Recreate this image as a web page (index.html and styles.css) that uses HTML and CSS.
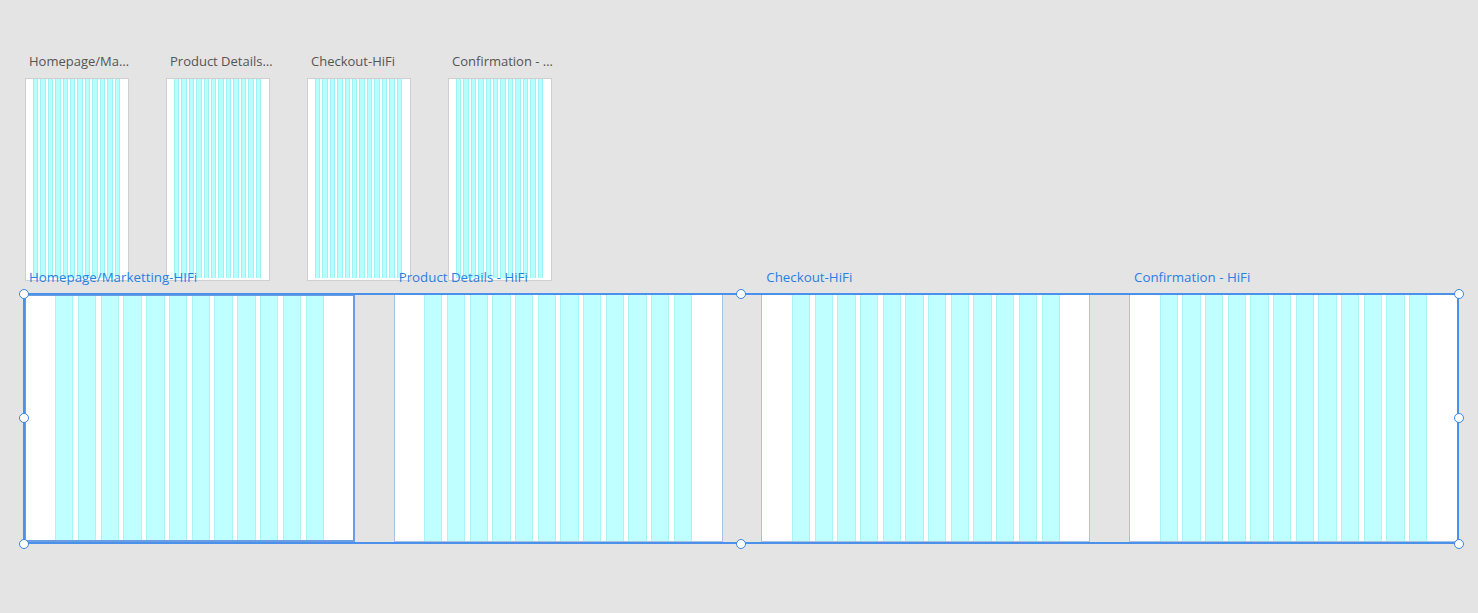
FILE: index.html
```
<!DOCTYPE html>
<html>
<head>
    <title>Artboards</title>
    <link rel="stylesheet" href="styles.css">
</head>
<body>
    <div class="canvas">
        <div class="thumbs">
            <div class="thumb">
                <div class="thumb-name">Homepage/Marketting-HIFi</div>
                <div class="thumb-box cols">
                    <span></span><span></span><span></span><span></span><span></span><span></span>
                    <span></span><span></span><span></span><span></span><span></span><span></span>
                </div>
            </div>
            <div class="thumb">
                <div class="thumb-name">Product Details - HiFi</div>
                <div class="thumb-box cols">
                    <span></span><span></span><span></span><span></span><span></span><span></span>
                    <span></span><span></span><span></span><span></span><span></span><span></span>
                </div>
            </div>
            <div class="thumb">
                <div class="thumb-name">Checkout-HiFi</div>
                <div class="thumb-box cols">
                    <span></span><span></span><span></span><span></span><span></span><span></span>
                    <span></span><span></span><span></span><span></span><span></span><span></span>
                </div>
            </div>
            <div class="thumb">
                <div class="thumb-name">Confirmation - HiFi</div>
                <div class="thumb-box cols">
                    <span></span><span></span><span></span><span></span><span></span><span></span>
                    <span></span><span></span><span></span><span></span><span></span><span></span>
                </div>
            </div>
        </div>

        <div class="boards">
            <div class="board board-first">
                <div class="board-name">Homepage/Marketting-HIFi</div>
                <div class="board-box cols">
                    <span></span><span></span><span></span><span></span><span></span><span></span>
                    <span></span><span></span><span></span><span></span><span></span><span></span>
                </div>
            </div>
            <div class="board">
                <div class="board-name">Product Details - HiFi</div>
                <div class="board-box cols">
                    <span></span><span></span><span></span><span></span><span></span><span></span>
                    <span></span><span></span><span></span><span></span><span></span><span></span>
                </div>
            </div>
            <div class="board">
                <div class="board-name">Checkout-HiFi</div>
                <div class="board-box cols">
                    <span></span><span></span><span></span><span></span><span></span><span></span>
                    <span></span><span></span><span></span><span></span><span></span><span></span>
                </div>
            </div>
            <div class="board">
                <div class="board-name">Confirmation - HiFi</div>
                <div class="board-box cols">
                    <span></span><span></span><span></span><span></span><span></span><span></span>
                    <span></span><span></span><span></span><span></span><span></span><span></span>
                </div>
            </div>

            <!-- selection box over all four artboards -->
            <div class="selection">
                <i class="handle h-tl"></i>
                <i class="handle h-tc"></i>
                <i class="handle h-tr"></i>
                <i class="handle h-ml"></i>
                <i class="handle h-mr"></i>
                <i class="handle h-bl"></i>
                <i class="handle h-bc"></i>
                <i class="handle h-br"></i>
            </div>
        </div>
    </div>
</body>
</html>
```

FILE: styles.css
```
body {
    margin: 0;
    background-color: #e4e4e4;
    font-family: "Open Sans", "Noto Sans", sans-serif;
}

.canvas {
    box-sizing: border-box;
    min-height: 100vh;
    padding: 52px 0 0 25px;
}

.cols {
    display: grid;
    grid-template-columns: repeat(12, 1fr);
    box-sizing: border-box;
    background-color: #fff;
}

.cols span {
    background-color: #c0ffff;
    border-left: 1px solid #a8f4f6;
    border-right: 1px solid #a8f4f6;
}

/* thumbnails */

.thumbs {
    display: flex;
    gap: 37px;
}

.thumb {
    width: 104px;
}

.thumb-name {
    width: 103px;
    height: 18px;
    line-height: 18px;
    margin-bottom: 8px;
    padding-left: 4px;
    font-size: 13px;
    color: #555;
    white-space: nowrap;
    overflow: hidden;
    text-overflow: ellipsis;
}

.thumb-box {
    height: 203px;
    padding: 0 8px 2px 7px;
    column-gap: 2px;
    border: 1px solid #cfcfcf;
}

.thumb-box span {
    background-color: #b6ffff;
    border-color: #9ff2f4;
}

/* big artboards */

.boards {
    position: relative;
    display: flex;
    gap: 38.7px;
    margin: -13px 0 0 -1px;
    width: 1434px;
}

.board {
    width: 329px;
}

.board-first {
    width: 331px;
}

.board-name {
    height: 18px;
    line-height: 18px;
    margin-bottom: 8px;
    padding-left: 5px;
    font-size: 13.3px;
    color: #2a7fe3;
    white-space: nowrap;
}

.board-box {
    height: 248px;
    padding: 0 29.5px;
    column-gap: 4.4px;
    border: 1px solid #a9c1e3;
}

.board-first .board-box {
    border: 2px solid #6a9ee4;
    padding: 0 29px;
}

.selection {
    position: absolute;
    left: -1px;
    top: 25px;
    width: 1432px;
    height: 247px;
    border: 2px solid #4b91e9;
    pointer-events: none;
}

.handle {
    position: absolute;
    width: 8px;
    height: 8px;
    border: 1.5px solid #3886e6;
    border-radius: 50%;
    background-color: #fff;
}

.h-tl, .h-tc, .h-tr { top: -6.5px; }
.h-ml, .h-mr { top: 118px; }
.h-bl, .h-bc, .h-br { bottom: -6.5px; }
.h-tl, .h-ml, .h-bl { left: -6.5px; }
.h-tc, .h-bc { left: 710.5px; }
.h-tr, .h-mr, .h-br { right: -6.5px; }
```
